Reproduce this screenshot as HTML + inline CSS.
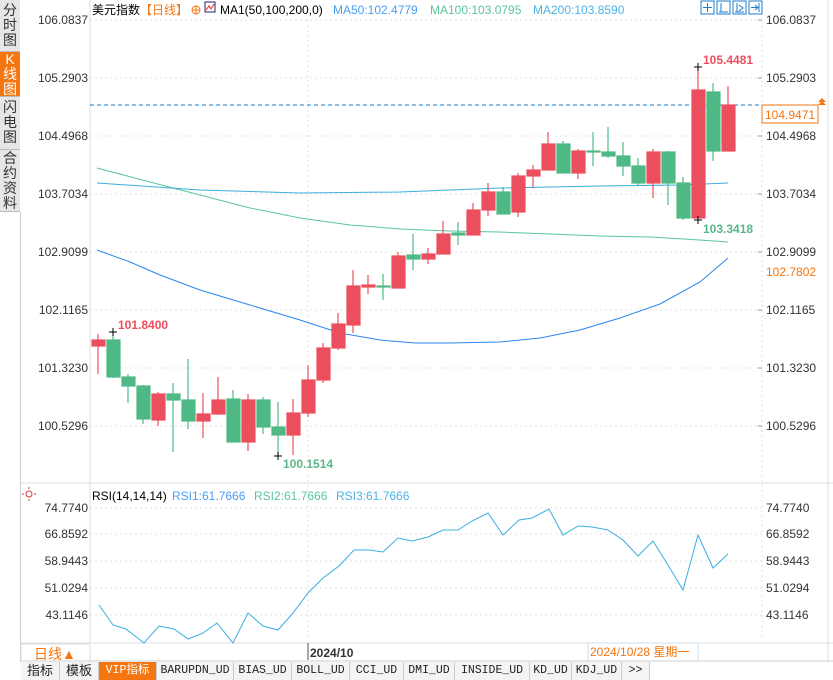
<!DOCTYPE html>
<html><head><meta charset="utf-8"><style>
body{margin:0;width:833px;height:680px;overflow:hidden;background:#fff;font-family:"Liberation Sans","Noto Sans CJK SC",sans-serif}
.sb{position:absolute;left:0;width:20px;background:#e6e6e6;color:#333;font-size:14px;line-height:15px;text-align:center;box-sizing:border-box;border-bottom:1px solid #bbb;overflow:hidden}
.tabs{position:absolute;left:21px;top:662px;height:18px;display:flex;font-size:12px}
.tabs div{border-right:1px solid #ccc;box-sizing:border-box;text-align:center;line-height:18px;color:#222;background:#f4f4f4;font-family:"Liberation Mono","Noto Sans CJK SC",monospace;font-size:11.5px;overflow:hidden;white-space:nowrap}
</style></head><body>
<div class="sb" style="top:0;height:52px;padding-top:3px">分<br>时<br>图</div>
<div class="sb" style="top:52px;height:45px;background:#f5750f;color:#fff;padding-top:0px">K<br>线<br>图</div>
<div class="sb" style="top:97px;height:53px;padding-top:3px">闪<br>电<br>图</div>
<div class="sb" style="top:150px;height:62px;padding-top:1px">合<br>约<br>资<br>料</div>
<div style="position:absolute;left:20px;top:212px;width:1px;height:450px;background:#ccc"></div>
<svg width="833" height="680" style="position:absolute;left:0;top:0" font-family="Liberation Sans, Noto Sans CJK SC, sans-serif">
<g stroke="#e2e2e2" stroke-dasharray="2,3">
<line x1="90" y1="20" x2="762" y2="20"/><line x1="90" y1="78" x2="762" y2="78"/><line x1="90" y1="136" x2="762" y2="136"/><line x1="90" y1="194" x2="762" y2="194"/><line x1="90" y1="252" x2="762" y2="252"/><line x1="90" y1="310" x2="762" y2="310"/><line x1="90" y1="368" x2="762" y2="368"/><line x1="90" y1="426" x2="762" y2="426"/>
<line x1="90" y1="508" x2="762" y2="508"/><line x1="90" y1="534" x2="762" y2="534"/><line x1="90" y1="561" x2="762" y2="561"/><line x1="90" y1="588" x2="762" y2="588"/><line x1="90" y1="615" x2="762" y2="615"/>
<line x1="308" y1="20" x2="308" y2="640"/>
</g>
<line x1="90" y1="0" x2="90" y2="643" stroke="#ddd"/>
<line x1="762" y1="20" x2="762" y2="640" stroke="#e2e2e2" stroke-dasharray="2,3"/>
<line x1="20" y1="483" x2="833" y2="483" stroke="#ddd"/>
<line x1="20" y1="643" x2="833" y2="643" stroke="#ddd"/>
<line x1="828" y1="0" x2="828" y2="662" stroke="#ddd"/>
<g font-size="12" fill="#333" text-anchor="end">
<text x="88" y="24">106.0837</text><text x="88" y="82">105.2903</text><text x="88" y="140">104.4968</text><text x="88" y="198">103.7034</text><text x="88" y="256">102.9099</text><text x="88" y="314">102.1165</text><text x="88" y="372">101.3230</text><text x="88" y="430">100.5296</text>
<text x="88" y="512">74.7740</text><text x="88" y="538">66.8592</text><text x="88" y="565">58.9443</text><text x="88" y="592">51.0294</text><text x="88" y="619">43.1146</text>
</g>
<g font-size="12" fill="#333">
<text x="766" y="24">106.0837</text><text x="766" y="82">105.2903</text><text x="766" y="140">104.4968</text><text x="766" y="198">103.7034</text><text x="766" y="256">102.9099</text><text x="766" y="314">102.1165</text><text x="766" y="372">101.3230</text><text x="766" y="430">100.5296</text>
<text x="766" y="512">74.7740</text><text x="766" y="538">66.8592</text><text x="766" y="565">58.9443</text><text x="766" y="592">51.0294</text><text x="766" y="619">43.1146</text>
<text x="766" y="276" fill="#f5750f">102.7802</text>
</g>
<g stroke="#999"><line x1="758" y1="20" x2="762" y2="20"/><line x1="758" y1="78" x2="762" y2="78"/><line x1="758" y1="136" x2="762" y2="136"/><line x1="758" y1="194" x2="762" y2="194"/><line x1="758" y1="252" x2="762" y2="252"/><line x1="758" y1="310" x2="762" y2="310"/><line x1="758" y1="368" x2="762" y2="368"/><line x1="758" y1="426" x2="762" y2="426"/></g>
<text x="92" y="14" font-size="12" fill="#000">美元指数</text>
<text x="140" y="14" font-size="12" fill="#f5750f">【日线】</text>
<circle cx="196" cy="10" r="4" fill="none" stroke="#f5750f"/><line x1="192" y1="10" x2="200" y2="10" stroke="#f5750f"/><line x1="196" y1="6" x2="196" y2="14" stroke="#f5750f"/>
<rect x="205" y="2" width="10" height="10" fill="#fff" stroke="#226"/><polyline points="206,10 209,6 211,9 214,4" fill="none" stroke="#d22"/>
<text x="220" y="14" font-size="12" fill="#000">MA1(50,100,200,0)</text>
<text x="333" y="14" font-size="12" fill="#4a9cf5">MA50:102.4779</text>
<text x="430" y="14" font-size="12" fill="#5ac79a">MA100:103.0795</text>
<text x="533" y="14" font-size="12" fill="#4ab4e6">MA200:103.8590</text>
<g fill="none" stroke="#1e7bd1"><rect x="701" y="1" width="13" height="13"/><rect x="717" y="1" width="13" height="13"/><rect x="733" y="1" width="13" height="13"/><rect x="749" y="1" width="13" height="13"/>
<path d="M707.5 3v9M703 7.5h9M719 12h9M721 3v9M735 12h9M737 3v9M739 5l4 3-4 3M751 7.5h6M755 5l3 2.5-3 2.5M759 3v9"/></g>
<polyline fill="none" stroke="#5ac79a" points="97,168 150,182 200,195 250,208 300,218 350,225 400,229 450,231 500,232 550,234 600,236 650,237 700,240 728,242"/>
<polyline fill="none" stroke="#3aaee0" points="97,183 200,190 300,193 400,192 500,188 600,186 680,185 728,183"/>
<polyline fill="none" stroke="#2a86ee" points="97,250 130,262 160,275 200,290 250,305 300,320 340,333 380,340 415,343 450,343 500,342 540,338 580,330 620,318 660,304 700,282 728,258"/>
<line x1="90" y1="105" x2="762" y2="105" stroke="#1e7bd1" stroke-dasharray="4,3"/>
<rect x="762" y="105" width="56" height="18" fill="#fff" stroke="#f5750f"/>
<text x="765" y="119" font-size="12" fill="#f5750f">104.9471</text>
<path d="M822 98l4 4h-8zM822 101l4 4h-8z" fill="#f5750f"/>
<g stroke-width="1.2">
<g stroke="#eb4f5e" fill="#eb4f5e">
<line x1="98" y1="334" x2="98" y2="374"/><rect x="92" y="340" width="13" height="6"/>
<line x1="158" y1="392" x2="158" y2="426"/><rect x="152" y="394" width="13" height="26"/>
<line x1="203" y1="393" x2="203" y2="438"/><rect x="197" y="414" width="13" height="7"/>
<line x1="218" y1="377" x2="218" y2="415"/><rect x="212" y="400" width="13" height="14"/>
<line x1="248" y1="394" x2="248" y2="451"/><rect x="242" y="400" width="13" height="42"/>
<line x1="293" y1="399" x2="293" y2="455"/><rect x="287" y="413" width="13" height="22"/>
<line x1="308" y1="365" x2="308" y2="417"/><rect x="302" y="380" width="13" height="33"/>
<line x1="323" y1="343" x2="323" y2="383"/><rect x="317" y="348" width="13" height="32"/>
<line x1="338" y1="313" x2="338" y2="350"/><rect x="332" y="324" width="13" height="24"/>
<line x1="353" y1="270" x2="353" y2="333"/><rect x="347" y="286" width="13" height="39"/>
<line x1="368" y1="275" x2="368" y2="294"/><rect x="362" y="285" width="13" height="2"/>
<line x1="398" y1="252" x2="398" y2="288"/><rect x="392" y="256" width="13" height="32"/>
<line x1="428" y1="248" x2="428" y2="264"/><rect x="422" y="254" width="13" height="5"/>
<line x1="443" y1="221" x2="443" y2="254"/><rect x="437" y="234" width="13" height="20"/>
<line x1="473" y1="203" x2="473" y2="235"/><rect x="467" y="210" width="13" height="25"/>
<line x1="488" y1="183" x2="488" y2="216"/><rect x="482" y="192" width="13" height="18"/>
<line x1="518" y1="173" x2="518" y2="217"/><rect x="512" y="176" width="13" height="36"/>
<line x1="533" y1="165" x2="533" y2="188"/><rect x="527" y="170" width="13" height="6"/>
<line x1="548" y1="132" x2="548" y2="170"/><rect x="542" y="144" width="13" height="26"/>
<line x1="578" y1="149" x2="578" y2="179"/><rect x="572" y="151" width="13" height="22"/>
<line x1="653" y1="149" x2="653" y2="198"/><rect x="647" y="152" width="13" height="31"/>
<line x1="698" y1="67" x2="698" y2="218"/><rect x="692" y="90" width="13" height="128"/>
<line x1="728" y1="86" x2="728" y2="151"/><rect x="722" y="105" width="13" height="46"/>
</g>
<g stroke="#4fb985" fill="#4fb985">
<line x1="113" y1="332" x2="113" y2="378"/><rect x="107" y="340" width="13" height="37"/>
<line x1="128" y1="374" x2="128" y2="403"/><rect x="122" y="377" width="13" height="9"/>
<line x1="143" y1="385" x2="143" y2="424"/><rect x="137" y="386" width="13" height="33"/>
<line x1="173" y1="383" x2="173" y2="452"/><rect x="167" y="394" width="13" height="6"/>
<line x1="188" y1="359" x2="188" y2="429"/><rect x="182" y="400" width="13" height="21"/>
<line x1="233" y1="390" x2="233" y2="442"/><rect x="227" y="399" width="13" height="43"/>
<line x1="263" y1="397" x2="263" y2="434"/><rect x="257" y="400" width="13" height="27"/>
<line x1="278" y1="402" x2="278" y2="456"/><rect x="272" y="427" width="13" height="8"/>
<line x1="383" y1="274" x2="383" y2="300"/><rect x="377" y="286" width="13" height="1"/>
<line x1="413" y1="234" x2="413" y2="270"/><rect x="407" y="255" width="13" height="4"/>
<line x1="458" y1="222" x2="458" y2="245"/><rect x="452" y="233" width="13" height="2"/>
<line x1="503" y1="187" x2="503" y2="214"/><rect x="497" y="192" width="13" height="22"/>
<line x1="563" y1="141" x2="563" y2="173"/><rect x="557" y="144" width="13" height="29"/>
<line x1="593" y1="132" x2="593" y2="166"/><rect x="587" y="151" width="13" height="1"/>
<line x1="608" y1="127" x2="608" y2="158"/><rect x="602" y="152" width="13" height="4"/>
<line x1="623" y1="142" x2="623" y2="176"/><rect x="617" y="156" width="13" height="10"/>
<line x1="638" y1="158" x2="638" y2="186"/><rect x="632" y="166" width="13" height="17"/>
<line x1="668" y1="151" x2="668" y2="205"/><rect x="662" y="152" width="13" height="31"/>
<line x1="683" y1="177" x2="683" y2="220"/><rect x="677" y="183" width="13" height="35"/>
<line x1="713" y1="83" x2="713" y2="161"/><rect x="707" y="92" width="13" height="59"/>
</g>
</g>
<g stroke="#000"><path d="M109 332h8M113 328v8M694 67h8M698 63v8M694 220h8M698 216v8M274 456h8M278 452v8"/></g>
<g font-size="12" font-weight="bold">
<text x="703" y="64" fill="#eb4f5e">105.4481</text>
<text x="703" y="233" fill="#5ab78a">103.3418</text>
<text x="118" y="329" fill="#eb4f5e">101.8400</text>
<text x="283" y="468" fill="#5ab78a">100.1514</text>
</g>
<circle cx="29" cy="494" r="3" fill="none" stroke="#d33"/><path d="M24 494h-2M34 494h2M29 489v-2M29 499v2" stroke="#d33"/>
<text x="92" y="500" font-size="12" fill="#000">RSI(14,14,14)</text>
<text x="172" y="500" font-size="12" fill="#4a9cf5">RSI1:61.7666</text>
<text x="254" y="500" font-size="12" fill="#5ac79a">RSI2:61.7666</text>
<text x="336" y="500" font-size="12" fill="#4ab4e6">RSI3:61.7666</text>
<polyline fill="none" stroke="#3aaee0" points="99,605 113,625 126,629 144,643 159,626 174,629 188,639 203,633 217,623 233,643 248,613 263,626 278,630 293,613 308,593 323,578 339,566 354,550 369,550 383,552 398,538 412,541 428,537 443,530 458,530 472,521 488,513 503,535 519,520 532,518 549,509 563,535 578,526 592,527 608,530 623,540 638,556 653,541 668,565 683,590 698,535 713,568 728,554"/>
<rect x="21" y="644" width="69" height="17" fill="#fff" stroke="#ddd"/>
<text x="34" y="659" font-size="14" fill="#f5750f">日线▲</text>
<line x1="308" y1="643" x2="308" y2="660" stroke="#555"/>
<text x="310" y="657" font-size="12" font-weight="bold" fill="#333">2024/10</text>
<rect x="588" y="643" width="110" height="18" fill="#fff" stroke="#cde"/>
<text x="590" y="656" font-size="12" fill="#f5750f">2024/10/28 星期一</text>
<line x1="20" y1="661" x2="833" y2="661" stroke="#ccc"/>
</svg>
<div class="tabs">
<div style="width:39px;font-family:'Liberation Sans','Noto Sans CJK SC',sans-serif;font-size:13px">指标</div><div style="width:39px;font-family:'Liberation Sans','Noto Sans CJK SC',sans-serif;font-size:13px">模板</div><div style="width:58px;background:#f5750f;color:#fff">VIP指标</div><div style="width:77px">BARUPDN_UD</div><div style="width:58px">BIAS_UD</div><div style="width:58px">BOLL_UD</div><div style="width:54px">CCI_UD</div><div style="width:51px">DMI_UD</div><div style="width:75px">INSIDE_UD</div><div style="width:42px">KD_UD</div><div style="width:50px">KDJ_UD</div><div style="width:28px">&gt;&gt;</div>
</div>
</body></html>
